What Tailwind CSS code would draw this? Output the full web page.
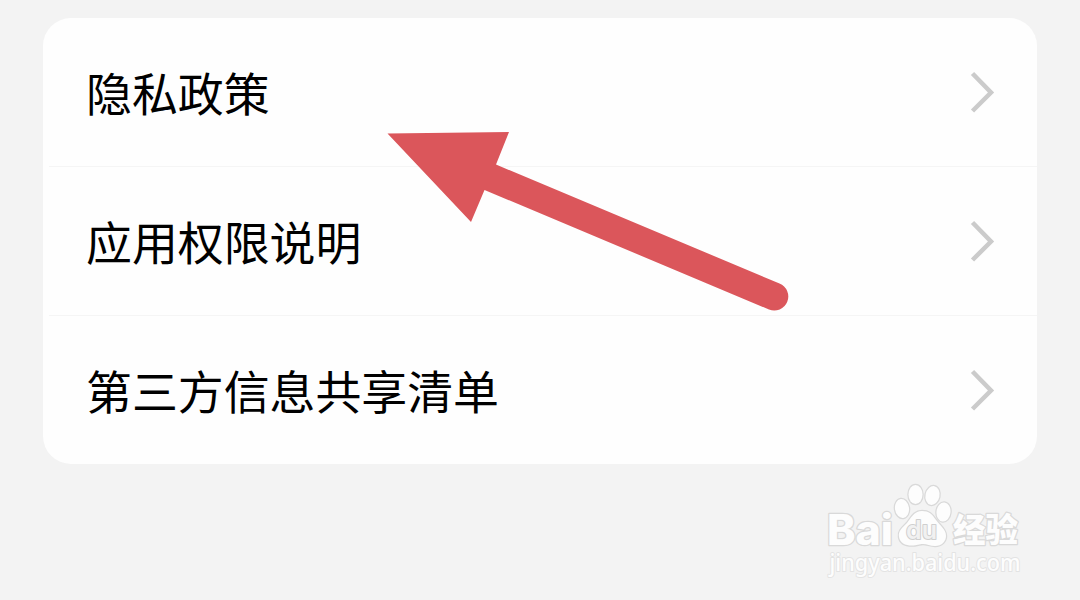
<!DOCTYPE html>
<html lang="zh-CN">
<head>
    <meta charset="UTF-8" />
    <meta name="viewport" content="width=device-width, initial-scale=1.0">
    <title>隐私</title>
    <script src="https://cdn.jsdelivr.net/npm/@tailwindcss/browser@4"></script>
</head>
<body class="relative h-[600px] overflow-hidden bg-[#f3f3f3] px-[43px] pt-[18px] font-['Noto_Sans_CJK_SC',sans-serif] text-black">

    <!-- 设置列表 -->
    <main class="flex h-[446px] flex-col rounded-[28px] bg-[#fefefe]">
        <a class="flex h-[149px] items-center justify-between pr-[42px] pl-[43px]">
            <span class="text-[45.900px] leading-none">隐私政策</span>
            <svg class="h-[42px] w-[25px]" viewBox="0 0 25 42" fill="none" stroke="#cbcbcb" stroke-width="4.500"><path d="M2.500 2.500 21 21.500 2.500 40" /></svg>
        </a>
        <hr class="-mt-px ml-[6px] border-[#f5f5f5]">
        <a class="flex h-[149px] items-center justify-between pr-[42px] pl-[43px]">
            <span class="text-[45.900px] leading-none">应用权限说明</span>
            <svg class="h-[42px] w-[25px]" viewBox="0 0 25 42" fill="none" stroke="#cbcbcb" stroke-width="4.500"><path d="M2.500 2.500 21 21.500 2.500 40" /></svg>
        </a>
        <hr class="ml-[6px] border-[#f5f5f5]">
        <a class="flex h-[148px] items-center justify-between pr-[42px] pl-[43px]">
            <span class="text-[45.900px] leading-none">第三方信息共享清单</span>
            <svg class="h-[42px] w-[25px]" viewBox="0 0 25 42" fill="none" stroke="#cbcbcb" stroke-width="4.500"><path d="M2.500 2.500 21 21.500 2.500 40" /></svg>
        </a>
    </main>

    <!-- 红色箭头 -->
    <svg class="absolute top-[120px] left-[380px] h-[200px] w-[420px]" viewBox="380 120 420 200" fill="#db565b">
        <path d="M387.500 133.500 509 132 496 164.500 779.500 283.500A14 14 0 0 1 769 309.500L484.500 190 471 222Z" />
    </svg>

    <!-- 水印 -->
    <svg class="absolute top-[475px] left-[815px] h-[110px] w-[220px]" viewBox="0 0 220 110" fill="#fdfdfd" stroke="#d9d9d9" stroke-width="2.500" stroke-linejoin="round" paint-order="stroke">
        <text x="12" y="69.500" font-family="Inter, sans-serif" font-weight="800" font-size="42" textLength="66" lengthAdjust="spacingAndGlyphs">Bai</text>
        <ellipse cx="87" cy="33.500" rx="7" ry="9.500" transform="rotate(-8 87 33.500)" />
        <ellipse cx="100.500" cy="19.500" rx="7" ry="9.500" />
        <ellipse cx="117.500" cy="20.500" rx="7" ry="9.500" transform="rotate(12 117.500 20.500)" />
        <ellipse cx="128.500" cy="37" rx="7" ry="9.500" transform="rotate(6 128.500 37)" />
        <path d="M107 36C99 36 96 43 92 48 87 53 83 56 84 62 85 68 90 70.500 97 70.500 102 70.500 104 69 108 69 112 69 115 71 120 71 127 71 131 66 131 61 131 54 125 51 121 45 117 39 114 36 107 36Z" />
        <text x="91" y="64" font-family="Inter, sans-serif" font-weight="600" font-size="25" fill="#f1f1f1" stroke="#cfcfcf" stroke-width="2" textLength="31" lengthAdjust="spacingAndGlyphs">du</text>
        <text x="138" y="66.500" font-family="Noto Sans CJK SC, sans-serif" font-weight="900" font-size="33" textLength="65" lengthAdjust="spacingAndGlyphs">经验</text>
        <text x="14.500" y="95.500" font-family="Noto Sans, sans-serif" font-weight="500" font-size="23.500" stroke="#e3e3e3" stroke-width="2" textLength="191" lengthAdjust="spacingAndGlyphs">jingyan.baidu.com</text>
    </svg>

</body>
</html>
